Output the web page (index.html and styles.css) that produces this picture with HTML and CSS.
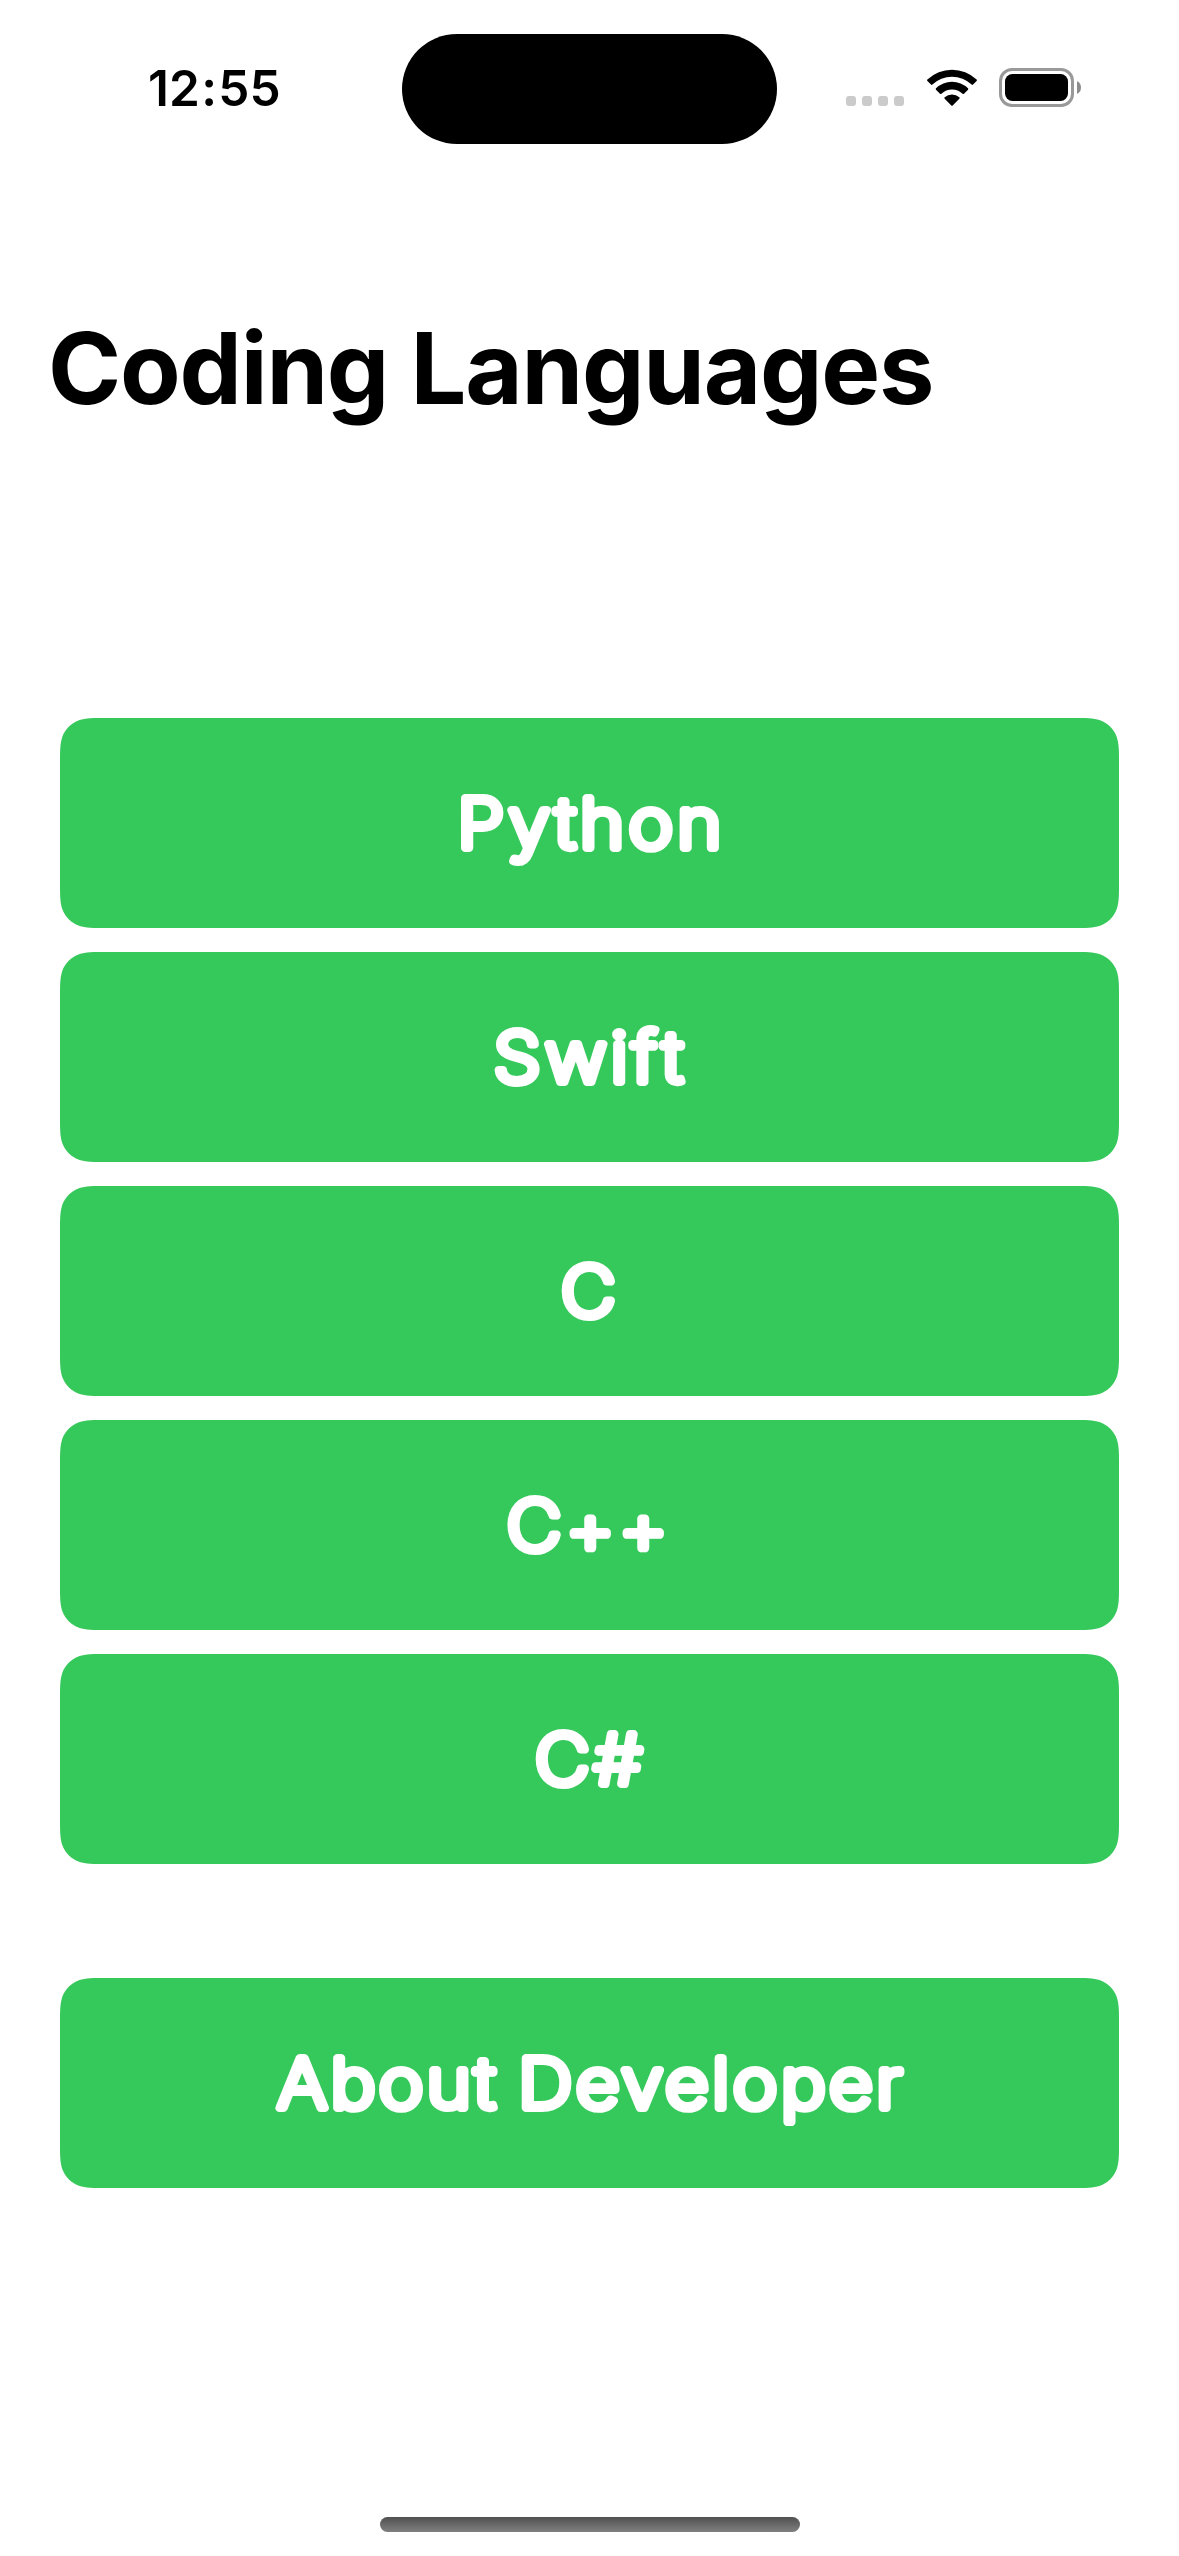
FILE: index.html
```html
<!DOCTYPE html>
<html lang="en">
<head>
<meta charset="utf-8">
<title>Coding Languages</title>
<link rel="stylesheet" href="styles.css">
</head>
<body>
<div class="screen">
  <header class="status-bar">
    <div class="time">12<span class="colon">:</span>55</div>
    <div class="island"></div>
    <div class="indicators">
      <div class="signal"><i></i><i></i><i></i><i></i></div>
      <svg class="wifi" viewBox="0 0 50 37" width="50" height="37">
        <path d="M0.4 10.6A35.5 35.5 0 0 1 49.6 10.6Q50.3 11.3 49.6 12L46 15.6Q45.3 16.2 44.6 15.6A28.2 28.2 0 0 0 5.4 15.6Q4.7 16.2 4 15.6L0.4 12Q-0.3 11.3 0.4 10.6Z"/>
        <path d="M9 19.3A23 23 0 0 1 41 19.3Q41.7 20 41 20.7L37 24.7Q36.3 25.3 35.6 24.7A15.4 15.4 0 0 0 14.4 24.7Q13.7 25.3 13 24.7L9 20.7Q8.3 20 9 19.3Z"/>
        <path d="M17.7 28.3A11 11 0 0 1 32.3 28.3Q33 29 32.3 29.7L25.7 36.4Q25 37.1 24.3 36.4L17.7 29.7Q17 29 17.7 28.3Z"/>
      </svg>
      <svg class="battery" viewBox="0 0 82 39" width="82" height="39">
        <rect x="1.5" y="1.5" width="72" height="36" rx="11.5" fill="none" stroke="#999" stroke-width="3"/>
        <rect x="6" y="6" width="63" height="27" rx="7.5"/>
        <path d="M78 13Q82 15 82 19.5T78 26Z" fill="#8c8c8c"/>
      </svg>
    </div>
  </header>
  <main class="content">
    <h1 class="title">Coding Languages</h1>
    <nav class="languages">
      <button class="button"><svg class="label" viewBox="-529.5 0 1059 210"><text x="2" y="130.5">Python</text></svg></button>
      <button class="button"><svg class="label" viewBox="-529.5 0 1059 210"><text x="1" y="130.5">Swif<tspan dx="1.5">t</tspan></text></svg></button>
      <button class="button"><svg class="label" viewBox="-529.5 0 1059 210"><text x="1" y="130.5">C</text></svg></button>
      <button class="button"><svg class="label" viewBox="-529.5 0 1059 210"><text x="0" y="130.5">C<tspan dy="3">++</tspan></text></svg></button>
      <button class="button"><svg class="label" viewBox="-529.5 0 1059 210"><text x="1" y="130.5">C#</text></svg></button>
    </nav>
    <button class="button"><svg class="label label-long" viewBox="-529.5 0 1059 210"><text x="2" y="130.5">About Developer</text></svg></button>
  </main>
  <div class="home-indicator"></div>
</div>
</body>
</html>
```
FILE: styles.css
```css
* { box-sizing: border-box; }

body {
  margin: 0;
  background: #fff;
  color: #000;
  font-family: Inter, "Liberation Sans", sans-serif;
}

.screen {
  display: flex;
  flex-direction: column;
  width: 1179px;
  height: 2556px;
  padding-bottom: 24px;
  overflow: hidden;
}

.status-bar {
  display: grid;
  grid-template-columns: 402px 375px 402px;
  height: 177px;
  padding-top: 34px;
  align-items: start;
}

.time {
  padding-left: 148px;
  font-size: 49.5px;
  font-weight: 590;
  line-height: 108px;
  letter-spacing: 0.1px;
}

.colon {
  padding: 0 1.2px;
}

.island {
  height: 110px;
  border-radius: 55px;
  background: #000;
}

.indicators {
  display: flex;
  align-items: flex-end;
  height: 73px;
  padding-left: 69px;
}

.signal {
  display: flex;
  gap: 6px;
  margin-bottom: 1px;
}

.signal i {
  width: 10px;
  height: 10px;
  border-radius: 3px;
  background: #cbcbcb;
}

.wifi {
  margin: 0 22.5px 1px;
}

.content {
  display: flex;
  flex-direction: column;
  padding: 0 60px;
}

.title {
  margin: 131px 0 290px -12px;
  font-size: 99px;
  font-weight: 720;
  line-height: 120px;
  letter-spacing: -1.2px;
  white-space: nowrap;
}

.languages {
  display: flex;
  flex-direction: column;
  gap: 24px;
  margin-bottom: 114px;
}

/* Continuous-curvature corners, 30px radius */
.button {
  display: block;
  width: 1059px;
  height: 210px;
  padding: 0;
  border: 0;
  background: #35c85a;
  clip-path: path("M45.86 0L1013.14 0C1026.35 0 1032.95 0 1040.06 2.25C1047.82 5.07 1053.93 11.18 1056.75 18.94C1059 26.05 1059 32.65 1059 45.86L1059 164.14C1059 177.35 1059 183.95 1056.75 191.06C1053.93 198.82 1047.82 204.93 1040.06 207.75C1032.95 210 1026.35 210 1013.14 210L45.86 210C32.65 210 26.05 210 18.94 207.75C11.18 204.93 5.07 198.82 2.25 191.06C0 183.95 0 177.35 0 164.14L0 45.86C0 32.65 0 26.05 2.25 18.94C5.07 11.18 11.18 5.07 18.94 2.25C26.05 0 32.65 0 45.86 0Z");
}

.label {
  display: block;
  width: 100%;
  height: 100%;
}

/* A round-joined outline softens the corners of the letters */
.label text {
  fill: #fff;
  stroke: #fff;
  stroke-width: 8px;
  stroke-linejoin: round;
  font-family: Inter, "Liberation Sans", sans-serif;
  font-size: 69px;
  font-weight: 200;
  letter-spacing: 4.2px;
  word-spacing: -5px;
  text-anchor: middle;
  transform: scaleX(1.09);
}

.label-long text {
  letter-spacing: 3.5px;
}

.home-indicator {
  width: 420px;
  height: 15px;
  margin: auto auto 0;
  border-radius: 7.5px;
  background: linear-gradient(#505050, #808080);
}
```
